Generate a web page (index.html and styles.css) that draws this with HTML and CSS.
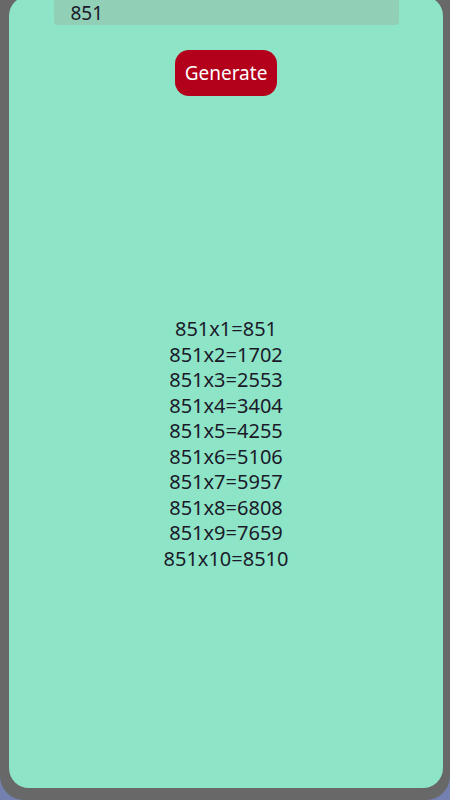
FILE: index.html
```html
<!DOCTYPE html>
<html lang="en">
<head>
    <meta charset="UTF-8">
    <meta name="viewport" content="width=device-width, initial-scale=1.0">
    <title>Multiplication Table</title>
    <link rel="stylesheet" href="styles.css">
</head>
<body>
    <div class="frame">
        <div class="card">
            <input class="number-input" type="text" id="num" value="851">
            <button class="generate-btn" id="generate">Generate</button>
            <div class="results" id="results"></div>
        </div>
    </div>

    <script>
        // table banao
        function generateTable() {
            const n = parseInt(document.getElementById('num').value, 10);
            let html = '';
            for (let i = 1; i <= 10; i++) {
                html += `<div>${n}x${i}=${n * i}</div>`;
            }
            document.getElementById('results').innerHTML = html;
        }

        document.getElementById('generate').onclick = generateTable;
        generateTable();
    </script>
</body>
</html>
```

FILE: styles.css
```css
* {
    margin: 0;
    padding: 0;
    box-sizing: border-box;
    font-family: 'Noto Sans', 'Open Sans', sans-serif;
}
body {
    background: #7480b0;
    overflow: hidden;
}
.frame {
    display: flex;
    flex-direction: column;
    height: 800px;
    background: #686868;
    border-radius: 0 0 24px 24px;
    padding: 0 7px 12px 9px;
}
.card {
    height: 792px;
    margin-top: -4px;
    background: #8ee4c6;
    border-radius: 20px;
    display: flex;
    flex-direction: column;
    align-items: center;
}
.number-input {
    width: 345px;
    height: 29px;
    border: none;
    outline: none;
    border-radius: 4px;
    background: #92cfb7;
    padding: 4px 17px 0;
    font-size: 19px;
    color: #1a1a2a;
}
.generate-btn {
    margin-top: 25px;
    background: #b3001b;
    color: white;
    border: none;
    border-radius: 14px;
    padding: 11px 10px;
    font-size: 19px;
    line-height: 24px;
    cursor: pointer;
}
.results {
    margin-top: 220px;
    text-align: center;
    font-size: 20px;
    line-height: 25.5px;
    color: #1a1a2a;
}
```
